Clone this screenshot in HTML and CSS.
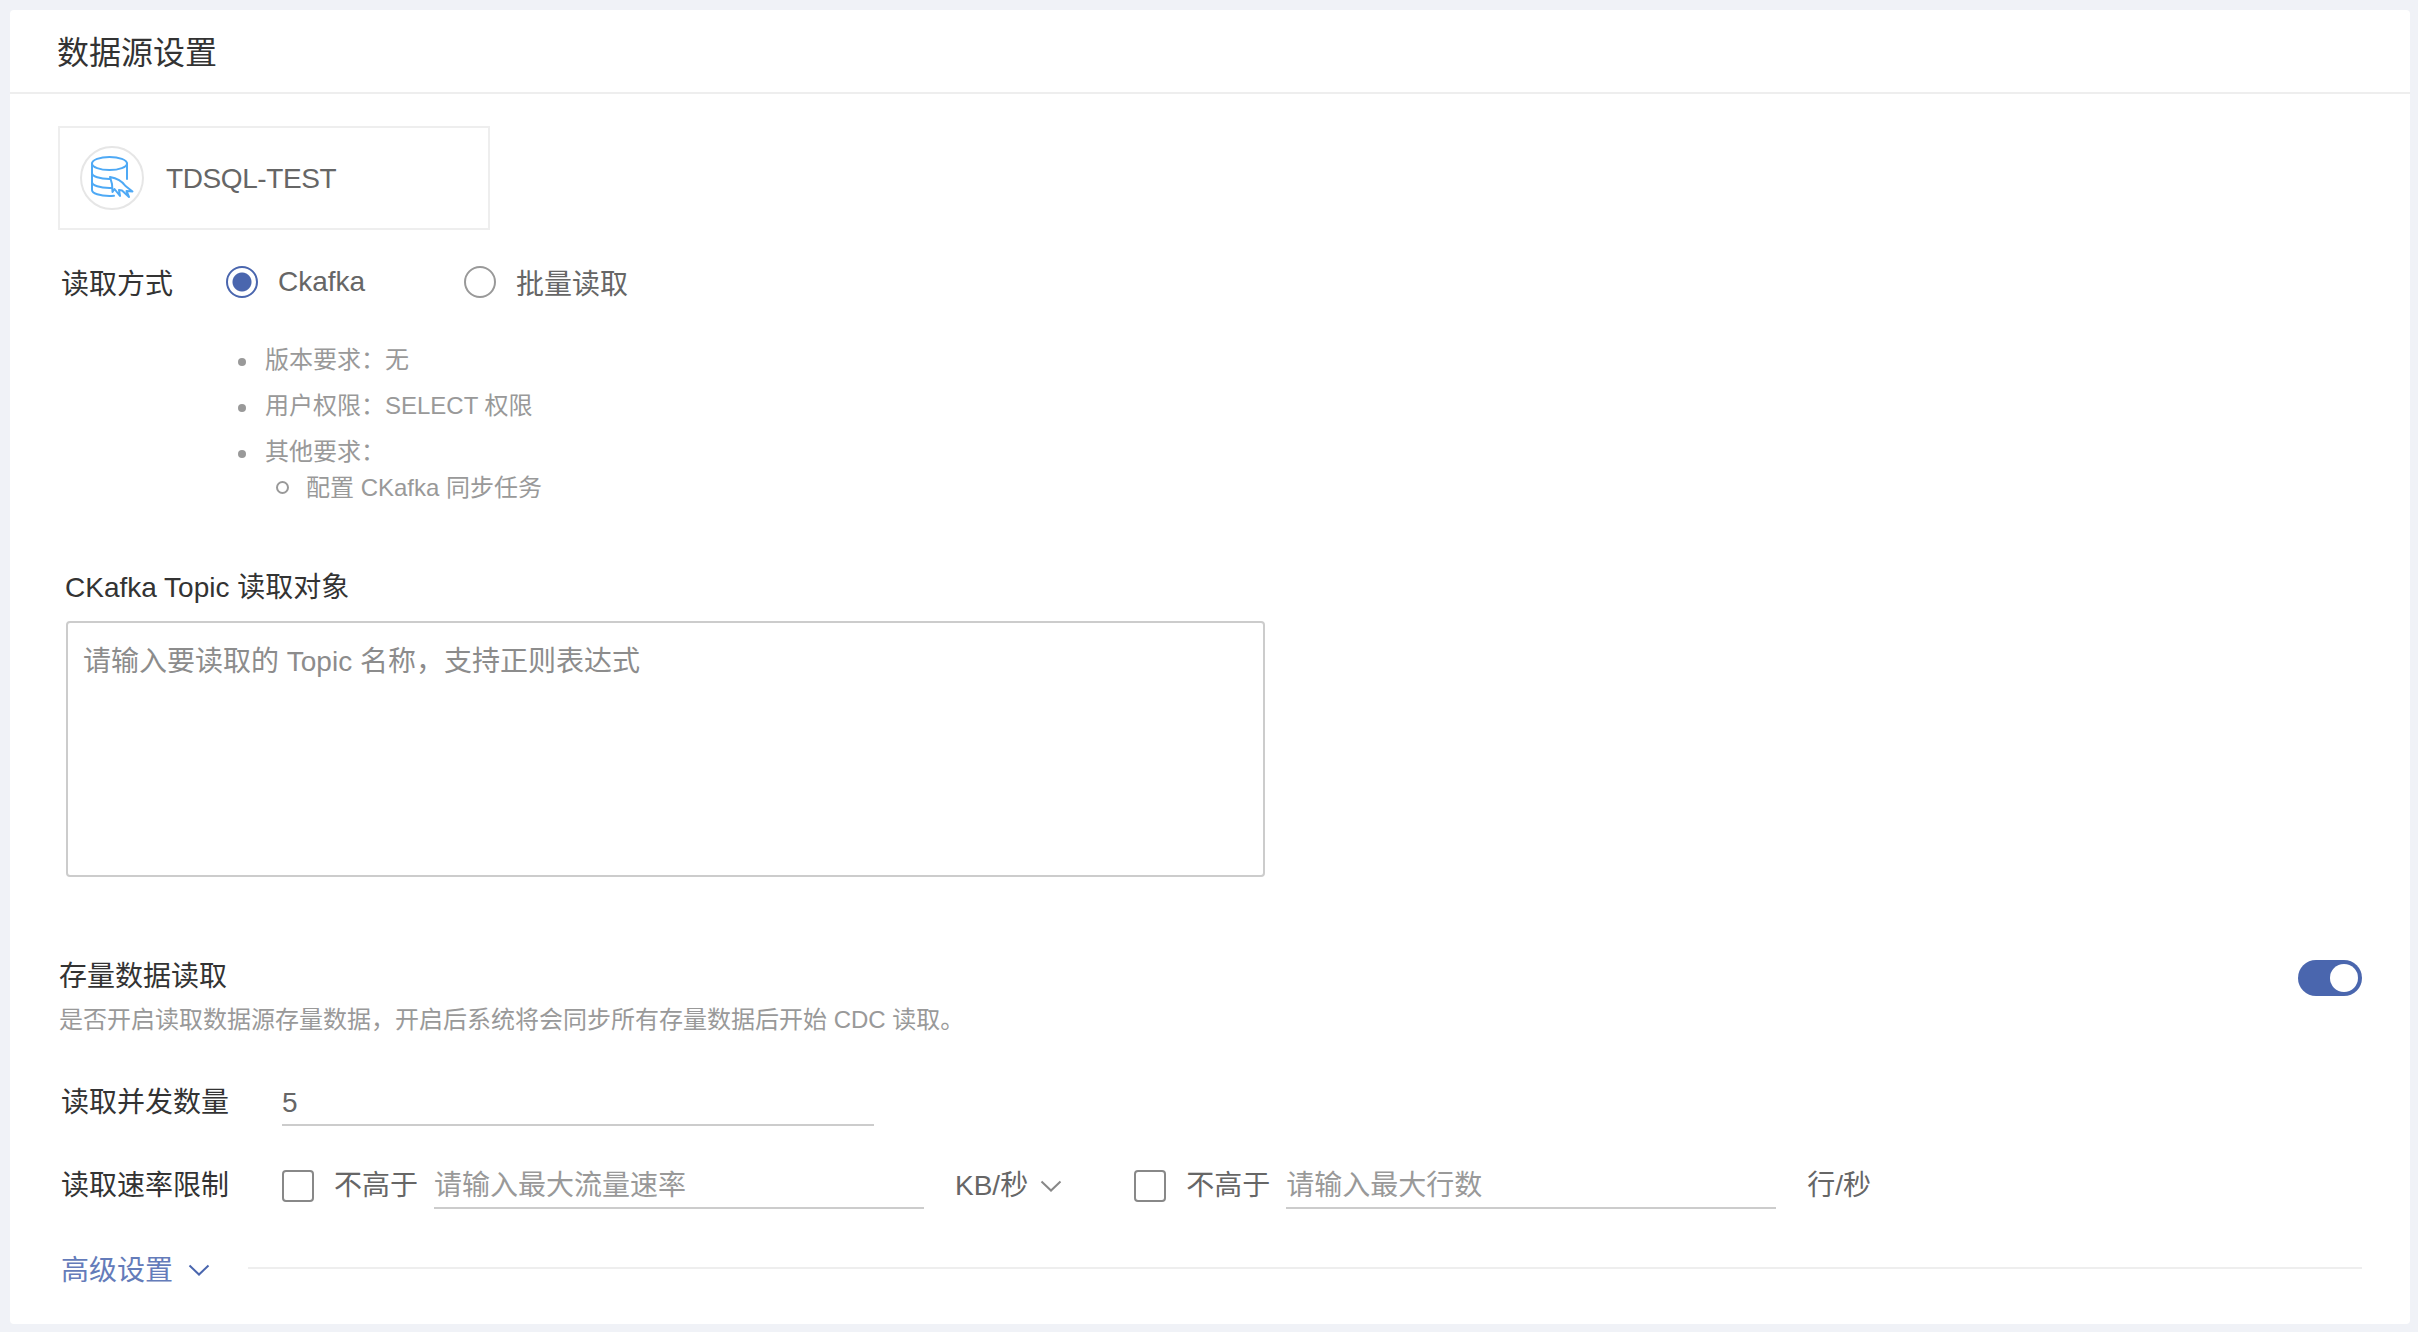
FILE: index.html
```html
<!DOCTYPE html>
<html lang="zh-CN">
<head>
<meta charset="utf-8">
<title>数据源设置</title>
<link rel="stylesheet" href="styles.css">
</head>
<body>
<main class="card">
  <header class="card-header">数据源设置</header>
  <div class="card-body">
    <div class="source-box">
      <span class="source-icon">
        <svg width="60" height="60" viewBox="0 0 60 60" fill="none" stroke="#4ea9f5" stroke-width="2" stroke-linecap="round" stroke-linejoin="round">
          <ellipse cx="27.500" cy="15.500" rx="17.500" ry="6.500"/>
          <path d="M10 15.500V42c0 3.500 8 6 17.500 6 1.500 0 3-.1 4.500-.2"/>
          <path d="M45 15.500V31"/>
          <path d="M10 25c0 3.500 8 6 17.500 6 .5 0 1 0 1.500 0"/>
          <path d="M10 34c0 3.500 8 6 17.500 6 1 0 2 0 3-.1"/>
          <path d="M28 29c6 1 12 4 15.500 9l7 5.500-6-.5 2.500 6-7-6.500-3-.5 1 6-5.500-7-2 3-.5-8z" fill="#fff"/>
        </svg>
      </span>
      <span class="source-name">TDSQL-TEST</span>
    </div>

    <div class="radio-row">
      <span class="form-label">读取方式</span>
      <label class="radio-item radio-item-first"><input class="radio" type="radio" name="mode" checked><span>Ckafka</span></label>
      <label class="radio-item"><input class="radio" type="radio" name="mode"><span>批量读取</span></label>
    </div>

    <ul class="req-list">
      <li>版本要求：无</li>
      <li>用户权限：SELECT 权限</li>
      <li>其他要求：
        <ul class="req-sub"><li>配置 CKafka 同步任务</li></ul>
      </li>
    </ul>

    <div class="topic-label">CKafka Topic 读取对象</div>
    <textarea class="topic-input" placeholder="请输入要读取的 Topic 名称，支持正则表达式"></textarea>

    <div class="stock-row">
      <div>
        <div class="stock-title">存量数据读取</div>
        <div class="stock-desc">是否开启读取数据源存量数据，开启后系统将会同步所有存量数据后开始 CDC 读取。</div>
      </div>
      <span class="switch"><span class="switch-knob"></span></span>
    </div>

    <div class="field-row field-row-first">
      <span class="field-label">读取并发数量</span>
      <input class="line-input line-input-wide" type="text" value="5">
    </div>

    <div class="field-row field-row-rate">
      <span class="field-label">读取速率限制</span>
      <input class="check" type="checkbox">
      <span class="check-text">不高于</span>
      <input class="line-input line-input-rate" type="text" placeholder="请输入最大流量速率">
      <span class="unit">KB/秒</span>
      <svg class="chevron chevron-unit" width="22" height="12" viewBox="0 0 22 12" fill="none" stroke="#888" stroke-width="2"><path d="M1.500 1.500 11 10.500l9.500-9"/></svg>
      <input class="check check-second" type="checkbox">
      <span class="check-text">不高于</span>
      <input class="line-input line-input-rate" type="text" placeholder="请输入最大行数">
      <span class="unit">行/秒</span>
    </div>

    <div class="advanced-row">
      <span class="advanced-text">高级设置</span>
      <svg class="chevron chevron-adv" width="22" height="12" viewBox="0 0 22 12" fill="none" stroke="#4a66ae" stroke-width="2"><path d="M1.500 1.500 11 10.500l9.500-9"/></svg>
      <span class="advanced-line"></span>
    </div>
  </div>
</main>
</body>
</html>
```

FILE: styles.css
```css
* { box-sizing: border-box; }
html, body { height: 100%; }
body {
  margin: 0;
  padding: 10px 8px 8px 10px;
  background: #f0f2f7;
  font-family: "Liberation Sans", "Noto Sans CJK SC", sans-serif;
  font-size: 28px;
  color: #333;
}
.card { background: #fff; border-radius: 4px; height: 1314px; }
.card-header {
  height: 84px;
  padding: 0 47px;
  border-bottom: 2px solid #eeeeee;
  font-size: 32px;
  line-height: 86px;
  color: #333;
}
.card-body { padding: 32px 48px 0; }

.source-box {
  display: flex;
  align-items: center;
  gap: 22px;
  width: 432px;
  height: 104px;
  padding-left: 20px;
  border: 2px solid #eeeeee;
}
.source-icon {
  display: flex;
  width: 64px;
  height: 64px;
  border: 2px solid #e6e6e6;
  border-radius: 50%;
}
.source-name { padding-top: 2px; letter-spacing: -0.4px; color: #666; }

.radio-row { display: flex; align-items: center; height: 44px; margin-top: 30px; padding-left: 3px; }
.form-label { width: 165px; }
.radio-item { display: flex; align-items: center; gap: 20px; color: #666; }
.radio-item-first { width: 238px; }
.radio {
  appearance: none;
  flex: none;
  width: 32px;
  height: 32px;
  margin: 0;
  border: 2px solid #999;
  border-radius: 50%;
  background: #fff;
}
.radio:checked { border-color: #4a66ae; background: radial-gradient(circle, #4a66ae 0 9px, #fff 10px); }

.req-list, .req-sub { list-style: none; }
.req-list { margin: 38px 0 0; padding: 0 0 0 207px; font-size: 24px; line-height: 36px; color: #999; }
.req-list > li { margin-bottom: 10px; }
.req-list > li::before {
  content: "";
  display: inline-block;
  width: 8px;
  height: 8px;
  margin: 0 19px 0 -27px;
  border-radius: 50%;
  background: #999;
  vertical-align: 2px;
}
.req-sub { margin: 0; padding-left: 37px; }
.req-sub li { margin: 0; }
.req-sub li::before {
  content: "";
  display: inline-block;
  width: 9px;
  height: 9px;
  margin: 0 17px 0 -26px;
  border: 2px solid #999;
  border-radius: 50%;
  vertical-align: 2px;
}

.topic-label { margin-top: 62px; padding-left: 7px; line-height: 40px; }
.topic-input {
  display: block;
  width: 1199px;
  height: 256px;
  margin: 13px 0 0 8px;
  padding: 19px 15px;
  border: 2px solid #ccc;
  border-radius: 4px;
  outline: none;
  resize: none;
  font: inherit;
  line-height: 40px;
  color: #666;
}
.topic-input::placeholder { color: #8c8c8c; opacity: 1; }
.line-input::placeholder { color: #999; opacity: 1; }

.stock-row { display: flex; justify-content: space-between; align-items: flex-start; margin-top: 78px; padding-left: 1px; }
.stock-title { line-height: 44px; }
.stock-desc { margin-top: 3px; font-size: 24px; line-height: 36px; color: #999; }
.switch { position: relative; width: 64px; height: 36px; margin-top: 5px; border-radius: 18px; background: #4a66ae; }
.switch-knob { position: absolute; top: 4px; right: 4px; width: 28px; height: 28px; border-radius: 50%; background: #fff; }

.field-row { display: flex; align-items: flex-start; padding-left: 3px; }
.field-row-first { margin-top: 43px; }
.field-row-rate { margin-top: 38px; }
.field-label { width: 221px; line-height: 44px; }
.line-input {
  flex: none;
  height: 45px;
  padding: 0;
  border: 0;
  border-bottom: 2px solid #ccc;
  outline: none;
  font: inherit;
  line-height: 43px;
  color: #666;
}
.line-input-wide { width: 592px; }
.line-input-rate { width: 490px; }
.check {
  appearance: none;
  flex: none;
  width: 32px;
  height: 32px;
  margin: 6px 0 0;
  border: 2px solid #888;
  border-radius: 4px;
  background: #fff;
}
.check-second { margin-left: 72px; }
.check-text { flex: none; width: 120px; padding-left: 20px; line-height: 44px; white-space: nowrap; color: #666; }
.unit { flex: none; margin-left: 31px; line-height: 44px; color: #666; }
.chevron { flex: none; }
.chevron-unit { margin: 16px 0 0 12px; }

.advanced-row { display: flex; align-items: center; height: 40px; margin-top: 39px; padding-left: 3px; }
.advanced-text { color: #4a66ae; opacity: .85; }
.chevron-adv { margin: 4px 0 0 15px; }
.advanced-line { flex: 1; height: 2px; margin-left: 38px; background: #eee; }
```
